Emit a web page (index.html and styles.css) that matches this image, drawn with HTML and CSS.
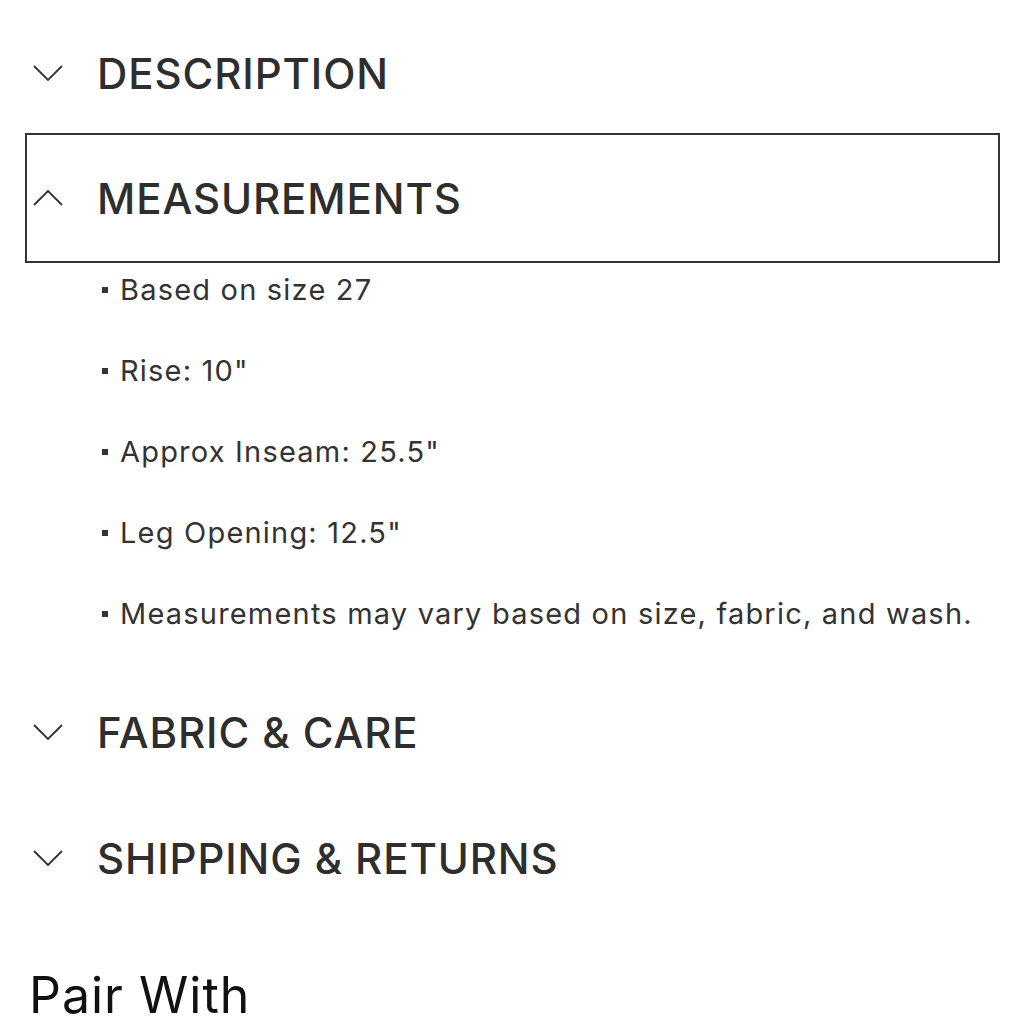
FILE: index.html
```html
<!DOCTYPE html>
<html>
<head>
<meta charset="utf-8">
<link rel="stylesheet" href="styles.css">
</head>
<body>
<div class="page">
  <div class="accordion">
    <div class="item">
      <div class="head">
        <svg class="chev" viewBox="0 0 30 16" width="30" height="16"><path d="M1 1 L15 15 L29 1" fill="none" stroke="#333" stroke-width="1.8"/></svg>
        <span class="title">DESCRIPTION</span>
      </div>
    </div>
    <div class="item open">
      <div class="head focused">
        <svg class="chev" viewBox="0 0 30 16" width="30" height="16"><path d="M1 15 L15 1 L29 15" fill="none" stroke="#333" stroke-width="1.8"/></svg>
        <span class="title">MEASUREMENTS</span>
      </div>
      <ul class="list">
        <li><span class="dot"></span>Based on size 27</li>
        <li><span class="dot"></span>Rise: 10"</li>
        <li><span class="dot"></span>Approx Inseam: 25.5"</li>
        <li><span class="dot"></span>Leg Opening: 12.5"</li>
        <li><span class="dot"></span>Measurements may vary based on size, fabric, and wash.</li>
      </ul>
    </div>
    <div class="item">
      <div class="head">
        <svg class="chev" viewBox="0 0 30 16" width="30" height="16"><path d="M1 1 L15 15 L29 1" fill="none" stroke="#333" stroke-width="1.8"/></svg>
        <span class="title">FABRIC &amp; CARE</span>
      </div>
    </div>
    <div class="item">
      <div class="head">
        <svg class="chev" viewBox="0 0 30 16" width="30" height="16"><path d="M1 1 L15 15 L29 1" fill="none" stroke="#333" stroke-width="1.8"/></svg>
        <span class="title">SHIPPING &amp; RETURNS</span>
      </div>
    </div>
  </div>
  <h2 class="pair">Pair With</h2>
</div>
</body>
</html>
```
FILE: styles.css
```css
html, body {
  margin: 0;
  padding: 0;
  background: #fff;
}
body {
  font-family: Inter, "Noto Sans", sans-serif;
  color: #2e2e2e;
}
.page {
  padding: 10px 25px 0 25px;
}
.accordion {
  display: flex;
  flex-direction: column;
}
.head {
  height: 126px;
  box-sizing: border-box;
  display: flex;
  align-items: center;
  padding-left: 8px;
  gap: 34px;
}
.head.focused {
  border: 2px solid #333;
  height: 130px;
  margin-top: -3px;
  padding-left: 6px;
}
.chev {
  flex: none;
  display: block;
}
.title {
  font-size: 42px;
  font-weight: 500;
  letter-spacing: 0.9px;
  color: #2e2e2e;
}
.list {
  list-style: none;
  margin: 0;
  padding: 7px 0 35px 77px;
  display: flex;
  flex-direction: column;
  gap: 41px;
}
.list li {
  font-size: 29px;
  line-height: 40px;
  letter-spacing: 1.2px;
  display: flex;
  align-items: center;
  color: #333;
}
.dot {
  width: 6px;
  height: 6px;
  background: #333;
  margin-right: 12px;
  flex: none;
}
.pair {
  margin: 44px 0 0 4px;
  font-size: 50px;
  font-weight: 400;
  letter-spacing: 1px;
  color: #111;
  line-height: 60px;
}
```
